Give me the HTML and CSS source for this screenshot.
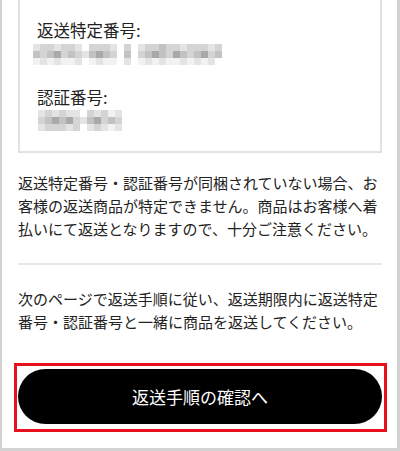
FILE: index.html
```html
<!DOCTYPE html>
<html lang="ja">
<head>
<meta charset="utf-8">
<title>返送手順</title>
<link rel="stylesheet" href="styles.css">
</head>
<body>
<div class="frame">
  <div class="info-box">
    <div class="label">返送特定番号:</div>
    <div class="mosaic mosaic-wide">
      <span class="b"></span><span class="c"></span><span class="c"></span><span class="b"></span><span class="c"></span><span class="c"></span><span class="b"></span><span class="w"></span><span class="c"></span><span class="c"></span><span class="c"></span><span class="b"></span><span class="w"></span><span class="c"></span><span class="w"></span><span class="b"></span><span class="c"></span><span class="c"></span><span class="d"></span><span class="c"></span><span class="c"></span><span class="b"></span><span class="c"></span><span class="c"></span><span class="c"></span><span class="b"></span><span class="c"></span>
      <span class="d"></span><span class="c"></span><span class="d"></span><span class="e"></span><span class="c"></span><span class="d"></span><span class="c"></span><span class="b"></span><span class="d"></span><span class="e"></span><span class="d"></span><span class="c"></span><span class="w"></span><span class="d"></span><span class="w"></span><span class="c"></span><span class="d"></span><span class="e"></span><span class="d"></span><span class="c"></span><span class="e"></span><span class="d"></span><span class="c"></span><span class="d"></span><span class="e"></span><span class="c"></span><span class="d"></span>
      <span class="a"></span><span class="b"></span><span class="a"></span><span class="b"></span><span class="a"></span><span class="a"></span><span class="b"></span><span class="w"></span><span class="a"></span><span class="b"></span><span class="a"></span><span class="a"></span><span class="w"></span><span class="b"></span><span class="w"></span><span class="a"></span><span class="b"></span><span class="a"></span><span class="b"></span><span class="a"></span><span class="a"></span><span class="b"></span><span class="a"></span><span class="b"></span><span class="a"></span><span class="b"></span><span class="w"></span>
    </div>
    <div class="label label-second">認証番号:</div>
    <div class="mosaic mosaic-short">
      <span class="b"></span><span class="c"></span><span class="b"></span><span class="c"></span><span class="b"></span><span class="b"></span><span class="w"></span><span class="c"></span><span class="b"></span><span class="c"></span><span class="a"></span><span class="b"></span>
      <span class="c"></span><span class="d"></span><span class="e"></span><span class="d"></span><span class="e"></span><span class="c"></span><span class="b"></span><span class="d"></span><span class="e"></span><span class="c"></span><span class="d"></span><span class="c"></span>
      <span class="b"></span><span class="c"></span><span class="c"></span><span class="c"></span><span class="b"></span><span class="c"></span><span class="w"></span><span class="b"></span><span class="c"></span><span class="b"></span><span class="a"></span><span class="b"></span>
    </div>
  </div>

  <p class="note note-first">返送特定番号・認証番号が同梱されていない場合、お客様の返送商品が特定できません。商品はお客様へ着払いにて返送となりますので、十分ご注意ください。</p>

  <hr class="divider">

  <p class="note">次のページで返送手順に従い、返送期限内に返送特定番号・認証番号と一緒に商品を返送してください。</p>

  <div class="highlight">
    <button class="pill-button" type="button">返送手順の確認へ</button>
  </div>
</div>
</body>
</html>
```

FILE: styles.css
```css
html, body {
  margin: 0;
  padding: 0;
  background: #ffffff;
}

body {
  width: 400px;
  height: 451px;
  overflow: hidden;
  font-family: "Noto Sans CJK JP", "Noto Sans", sans-serif;
  color: #222222;
}

.frame {
  box-sizing: border-box;
  width: 400px;
  height: 451px;
  border-left: 2px solid #d2d2d2;
  border-right: 3px solid #d2d2d2;
  border-bottom: 3px solid #d2d2d2;
  padding: 0 15px 0 16px;
  display: flex;
  flex-direction: column;
}

.info-box {
  border: 2px solid #e2e2e2;
  border-top: none;
  padding: 18px 18px 20px 17px;
  display: flex;
  flex-direction: column;
  align-items: flex-start;
}

.label {
  font-size: 16.5px;
  line-height: 24px;
  color: #222222;
}

.label-second {
  margin-top: 20px;
}

.mosaic {
  display: grid;
  grid-auto-rows: 7px;
  margin-top: 2px;
}

.mosaic-wide {
  grid-template-columns: repeat(27, 7px);
  margin-left: -4px;
}

.mosaic-short {
  grid-template-columns: repeat(12, 7px);
  margin-top: 1px;
  margin-left: 1px;
}

.mosaic span { display: block; }
.mosaic .w { background: #ffffff; }
.mosaic .a { background: #f2f2f2; }
.mosaic .b { background: #e4e4e4; }
.mosaic .c { background: #d4d4d4; }
.mosaic .d { background: #c2c2c2; }
.mosaic .e { background: #a9a9a9; }

.note {
  margin: 22px 0 0 0;
  font-size: 15px;
  line-height: 23px;
  color: #222222;
}

.note-first {
  margin-top: 18px;
}

.divider {
  margin: 23px 0 0 0;
  border: none;
  height: 2px;
  background: #e6e6e6;
}

.highlight {
  margin: 30px -5px 0 -4px;
  border: 3px solid #e8101c;
  padding: 3px 2px 5px 1px;
  display: flex;
}

.pill-button {
  flex: 1;
  height: 55px;
  border: none;
  border-radius: 28px;
  background: #000000;
  color: #ffffff;
  font-family: "Noto Sans CJK JP", "Noto Sans", sans-serif;
  font-size: 17px;
  padding: 0;
  cursor: pointer;
}
```
